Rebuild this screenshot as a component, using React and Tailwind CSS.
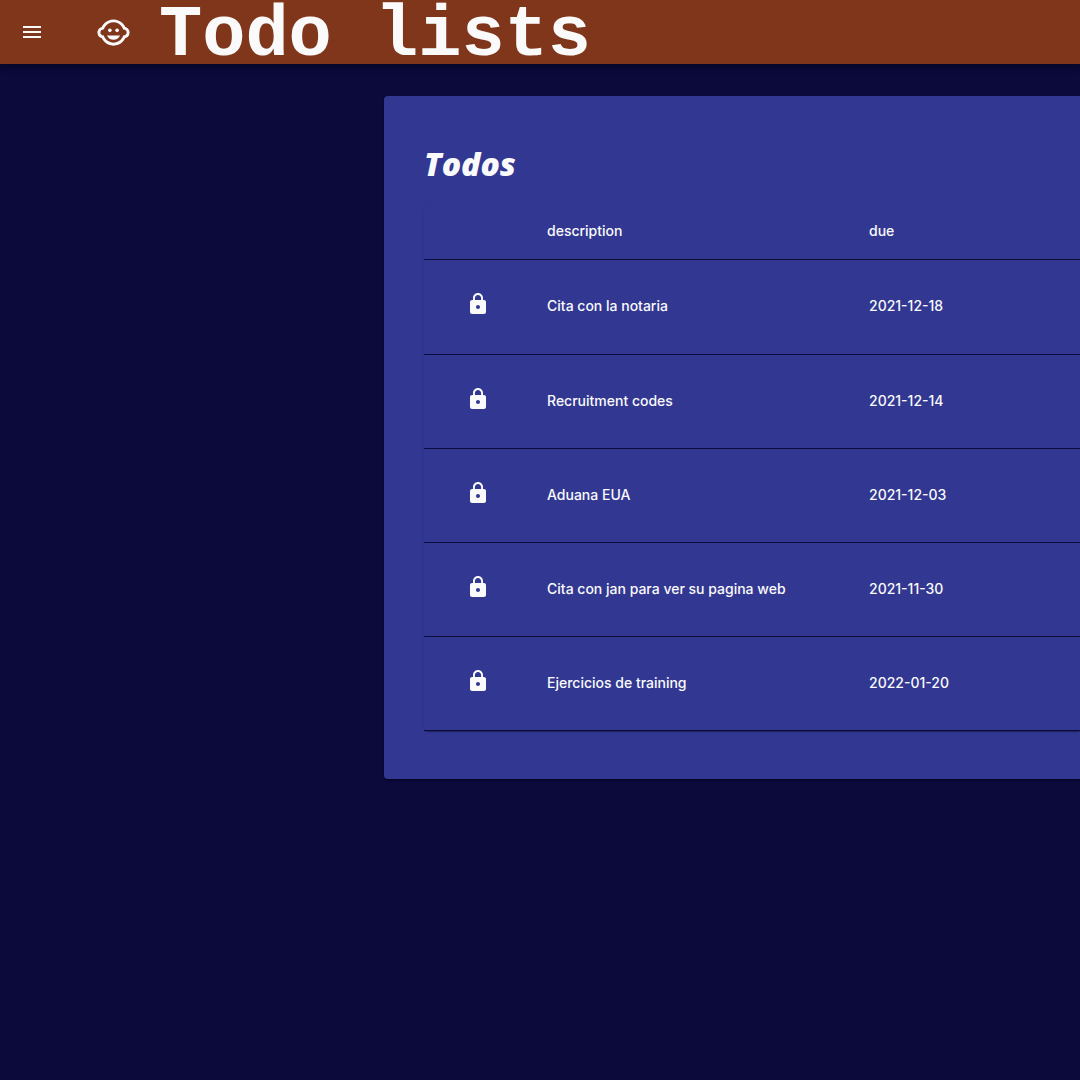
import { MdChildCare, MdLock, MdMenu } from "react-icons/md";

const todos = [
  { description: "Cita con la notaria", due: "2021-12-18" },
  { description: "Recruitment codes", due: "2021-12-14" },
  { description: "Aduana EUA", due: "2021-12-03" },
  { description: "Cita con jan para ver su pagina web", due: "2021-11-30" },
  { description: "Ejercicios de training", due: "2022-01-20" },
];

export default function App() {
  return (
    <div className="flex min-h-screen flex-col bg-[#0c0a3b] font-['Inter',sans-serif] text-[#fafafa]">
      <header className="flex h-16 items-center bg-[#80361b] px-2 shadow-[0_2px_4px_-1px_rgba(0,0,0,0.2),0_4px_5px_rgba(0,0,0,0.14),0_1px_10px_rgba(0,0,0,0.12)]">
        <button type="button" aria-label="Open menu" className="rounded-full p-3">
          <MdMenu className="size-6" />
        </button>
        <MdChildCare className="ml-10 size-[35px] shrink-0" aria-hidden="true" />
        <h1 className="ml-7 pt-2 whitespace-nowrap font-['Liberation_Mono',monospace] text-7xl leading-[64px] font-bold">
          Todo lists
        </h1>
      </header>

      <main className="flex pt-8 pl-96">
        <section className="flex-1 rounded-l bg-[#323892] pt-12 pb-12 pl-10 shadow-[0_2px_1px_-1px_rgba(0,0,0,0.2),0_1px_1px_rgba(0,0,0,0.14),0_1px_3px_rgba(0,0,0,0.12)]">
          <h2 className="mb-5 font-['Open_Sans',sans-serif] text-[32px] leading-10 font-extrabold italic">Todos</h2>
          <div className="rounded-l shadow-[0_2px_1px_-1px_rgba(0,0,0,0.2),0_1px_1px_rgba(0,0,0,0.14),0_1px_3px_rgba(0,0,0,0.12)]">
            <table className="w-full table-fixed border-separate border-spacing-0 text-left text-sm">
              <colgroup>
                <col className="w-[107px]" />
                <col className="w-[322px]" />
                <col />
              </colgroup>
              <thead>
                <tr className="h-14">
                  <td className="border-b border-[#0c0a3b]" />
                  <th scope="col" className="border-b border-[#0c0a3b] px-4 pb-0.5 font-medium">description</th>
                  <th scope="col" className="border-b border-[#0c0a3b] px-4 pb-0.5 font-medium">due</th>
                </tr>
              </thead>
              <tbody>
                {todos.map((todo) => (
                  <tr key={todo.description} className="h-[94px] font-medium first:h-[95px]">
                    <td className="border-b border-[#0c0a3b] pb-1.5">
                      <MdLock className="mx-auto size-6" aria-label="Locked" />
                    </td>
                    <td className="border-b border-[#0c0a3b] px-4 pb-0.5">{todo.description}</td>
                    <td className="border-b border-[#0c0a3b] px-4 pb-0.5">{todo.due}</td>
                  </tr>
                ))}
              </tbody>
            </table>
          </div>
        </section>
      </main>
    </div>
  );
}
